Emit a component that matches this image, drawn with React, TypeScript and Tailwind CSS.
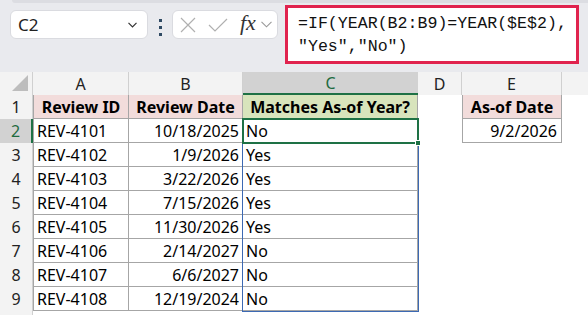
import React from 'react';

const COLS = [
  { key: 'A', w: 96 },
  { key: 'B', w: 114 },
  { key: 'C', w: 175 },
  { key: 'D', w: 44 },
  { key: 'E', w: 100 },
  { key: 'F', w: 26 },
];

const rows = [
  { id: 'REV-4101', date: '10/18/2025', match: 'No' },
  { id: 'REV-4102', date: '1/9/2026', match: 'Yes' },
  { id: 'REV-4103', date: '3/22/2026', match: 'Yes' },
  { id: 'REV-4104', date: '7/15/2026', match: 'Yes' },
  { id: 'REV-4105', date: '11/30/2026', match: 'Yes' },
  { id: 'REV-4106', date: '2/14/2027', match: 'No' },
  { id: 'REV-4107', date: '6/6/2027', match: 'No' },
  { id: 'REV-4108', date: '12/19/2024', match: 'No' },
];

function RowHead({ n, active }: { n: number | string; active?: boolean }) {
  return (
    <div
      className={`w-[33px] shrink-0 flex items-center justify-center text-[16px] ${
        active
          ? 'bg-[#d2d2d2] text-[#1e6b3f] border-r-2 border-[#1e7145]'
          : 'bg-[#f3f3f3] text-[#222] border-r border-[#d0d0d0]'
      }`}
    >
      {n}
    </div>
  );
}

export default function App() {
  return (
    <div
      className="relative w-[588px] h-[315px] overflow-hidden bg-white text-black"
      style={{ fontFamily: '"Noto Sans", "Open Sans", sans-serif' }}
    >
      {/* Formula bar */}
      <div className="h-[72px] bg-[#e9eaee] relative">
        <div className="h-[3px] ml-[12px] bg-[#dcdde2] rounded-bl-md" />
        <div className="flex items-start">
          {/* Name box */}
          <div className="mt-[7px] ml-[10px] w-[138px] h-[29px] bg-white rounded-md border border-[#dadbe0] flex items-center justify-between pl-[7px] pr-[10px]">
            <span className="text-[17px] text-[#222]">C2</span>
            <svg width="9" height="6" viewBox="0 0 9 6">
              <path d="M0.5 0.8 L4.5 4.8 L8.5 0.8" fill="none" stroke="#333" strokeWidth="1.2" />
            </svg>
          </div>
          {/* dots */}
          <div className="mt-[16px] ml-[11px] flex flex-col gap-[4px]">
            <div className="w-[3px] h-[3px] bg-[#2f4a63]" />
            <div className="w-[3px] h-[3px] bg-[#2f4a63]" />
            <div className="w-[3px] h-[3px] bg-[#2f4a63]" />
          </div>
          {/* buttons */}
          <div className="mt-[7px] ml-[10px] w-[106px] h-[29px] bg-white rounded-md border border-[#dadbe0] flex items-center pl-[7px]">
            <svg width="16" height="16" viewBox="0 0 16 16">
              <path d="M1 1 L15 15 M15 1 L1 15" stroke="#b0b0b0" strokeWidth="1.2" />
            </svg>
            <svg width="20" height="14" viewBox="0 0 20 14" className="ml-[12px]">
              <path d="M1 7 L7 13 L19 1" fill="none" stroke="#b0b0b0" strokeWidth="1.2" />
            </svg>
            <span
              className="ml-[12px] text-[22px] italic text-[#333] leading-none -mt-[3px]"
              style={{ fontFamily: '"Liberation Serif", serif' }}
            >
              fx
            </span>
            <svg width="11" height="7" viewBox="0 0 11 7" className="ml-[5px]">
              <path d="M0.5 0.8 L5.5 5.8 L10.5 0.8" fill="none" stroke="#999" strokeWidth="1.1" />
            </svg>
          </div>
          {/* formula */}
          <div className="mt-[2px] ml-[7px] w-[294px] h-[59px] bg-white border-[3px] border-[#e0234e] pl-[10px] pt-[4px]">
            <div
              className="text-[16.6px] leading-[23px] text-[#111] whitespace-pre"
              style={{ fontFamily: '"Liberation Mono", monospace' }}
            >
              {'=IF(YEAR(B2:B9)=YEAR($E$2),\n"Yes","No")'}
            </div>
          </div>
        </div>
      </div>

      {/* Column headers */}
      <div className="flex h-[23px] bg-[#f3f3f3] text-[16px] text-[#222]">
        <div className="w-[33px] shrink-0 border-r border-[#d0d0d0] relative">
          <svg width="18" height="18" viewBox="0 0 18 18" className="absolute right-[3px] bottom-[3px]">
            <path d="M17 1 L17 17 L1 17 Z" fill="#bdbdbd" />
          </svg>
        </div>
        {COLS.map((c) => (
          <div
            key={c.key}
            style={{ width: c.w }}
            className={`shrink-0 flex items-center justify-center ${
              c.key === 'C'
                ? 'bg-[#d2d2d2] text-[#1e6b3f] border-b-2 border-[#1e7145]'
                : 'border-r border-[#d0d0d0]'
            } ${c.key === 'F' ? 'border-r-0' : ''}`}
          >
            {c.key === 'F' ? '' : c.key}
          </div>
        ))}
      </div>

      {/* Row 1 */}
      <div className="flex h-[24px] text-[16px]">
        <RowHead n={1} />
        <div className="w-[96px] shrink-0 bg-[#f2dcdb] border-l border-r border-b border-[#a6a6a6] flex items-center justify-center font-bold">
          Review ID
        </div>
        <div className="w-[114px] shrink-0 bg-[#f2dcdb] border-r border-b border-[#a6a6a6] flex items-center justify-center font-bold">
          Review Date
        </div>
        <div className="w-[175px] shrink-0 bg-[#d8e4bc] border-r border-b border-[#a6a6a6] flex items-center justify-center font-bold">
          Matches As-of Year?
        </div>
        <div className="w-[44px] shrink-0" />
        <div className="w-[100px] shrink-0 bg-[#f2dcdb] border-l border-r border-b border-[#a6a6a6] flex items-center justify-center font-bold">
          As-of Date
        </div>
      </div>

      {rows.map((r, i) => (
        <div key={r.id} className="flex h-[24px] text-[16px]">
          <RowHead n={i + 2} active={i === 0} />
          <div className="w-[96px] shrink-0 border-l border-r border-b border-[#a6a6a6] flex items-center pl-[3px]">
            {r.id}
          </div>
          <div className="w-[114px] shrink-0 border-r border-b border-[#a6a6a6] flex items-center justify-end pr-[3px]">
            {r.date}
          </div>
          <div className="w-[175px] shrink-0 border-r border-b border-[#a6a6a6] flex items-center pl-[3px]">
            {r.match}
          </div>
          <div className="w-[44px] shrink-0" />
          {i === 0 && (
            <div className="w-[100px] shrink-0 border-l border-r border-b border-[#a6a6a6] flex items-center justify-end pr-[4px]">
              9/2/2026
            </div>
          )}
        </div>
      ))}
      <div className="flex h-[10px]">
        <div className="w-[33px] bg-[#f3f3f3] border-r border-[#d0d0d0]" />
      </div>

      {/* spill range outline */}
      <div className="absolute left-[242px] top-[118px] w-[177px] h-[194px] border border-[#3c69b3] pointer-events-none" />
      {/* active cell */}
      <div className="absolute left-[242px] top-[118px] w-[177px] h-[26px] border-2 border-[#1e7145] pointer-events-none" />
      <div className="absolute left-[415px] top-[140px] w-[6px] h-[6px] bg-[#1e7145] border border-white" />
    </div>
  );
}
